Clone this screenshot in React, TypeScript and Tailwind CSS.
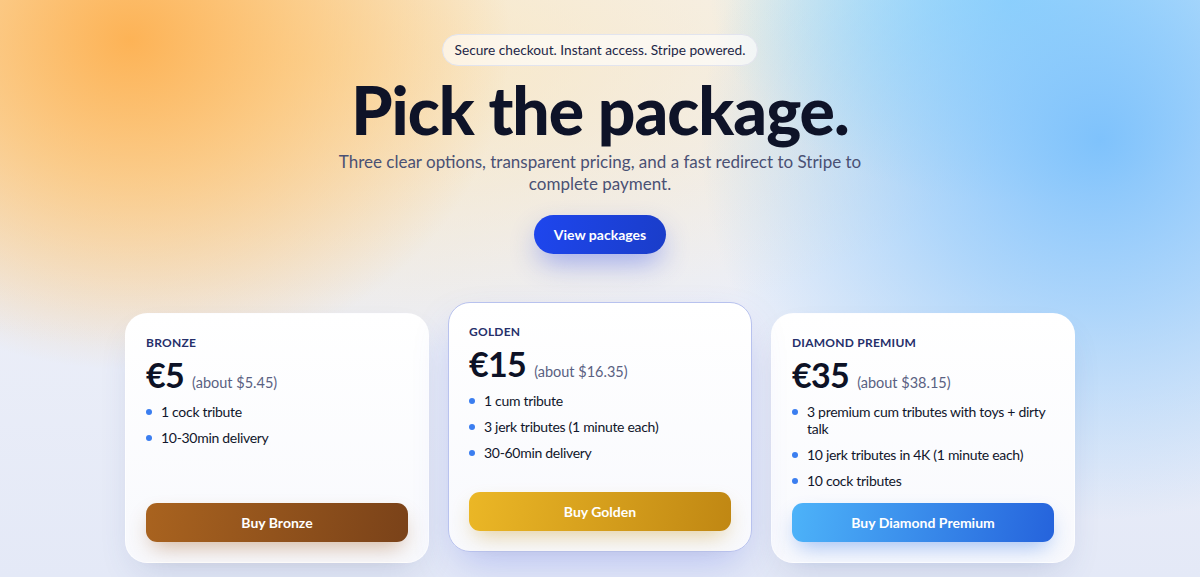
import { useState } from 'react';

interface Pack {
  id: string;
  label: string;
  price: string;
  approx: string;
  features: string[];
  cta: string;
  button: string;
  featured?: boolean;
}

const packs: Pack[] = [
  {
    id: 'bronze',
    label: 'Bronze',
    price: '€5',
    approx: '(about $5.45)',
    features: ['1 cock tribute', '10-30min delivery'],
    cta: 'Buy Bronze',
    button:
      'bg-[linear-gradient(100deg,#a9631f,#7a4219)] shadow-[0_10px_22px_-6px_rgba(160,90,30,0.45)]',
  },
  {
    id: 'golden',
    label: 'Golden',
    price: '€15',
    approx: '(about $16.35)',
    features: ['1 cum tribute', '3 jerk tributes (1 minute each)', '30-60min delivery'],
    cta: 'Buy Golden',
    button:
      'bg-[linear-gradient(100deg,#ebb726,#c08713)] shadow-[0_10px_22px_-6px_rgba(200,150,30,0.45)]',
    featured: true,
  },
  {
    id: 'diamond',
    label: 'Diamond Premium',
    price: '€35',
    approx: '(about $38.15)',
    features: [
      '3 premium cum tributes with toys + dirty talk',
      '10 jerk tributes in 4K (1 minute each)',
      '10 cock tributes',
    ],
    cta: 'Buy Diamond Premium',
    button:
      'bg-[linear-gradient(100deg,#4db3f9,#2563dc)] shadow-[0_10px_22px_-6px_rgba(40,110,230,0.45)]',
  },
];

function PackCard({ pack, onBuy }: { pack: Pack; onBuy: (id: string) => void }) {
  return (
    <div
      className={
        'flex h-[250px] w-[304px] flex-col rounded-[22px] bg-[linear-gradient(180deg,#ffffff,#f8f9fd)] px-5 pb-5 pt-[20px] ' +
        (pack.featured
          ? '-translate-y-[11px] border border-[#b8c2ee] shadow-[0_18px_40px_-10px_rgba(90,110,230,0.35)]'
          : 'border border-white/70 shadow-[0_16px_36px_-12px_rgba(60,80,140,0.2)]')
      }
    >
      <div className="text-[12px] font-bold uppercase tracking-[0.02em] text-[#26306b]">
        {pack.label}
      </div>
      <div className="mt-[3px] flex items-baseline gap-2">
        <span className="text-[34px] font-bold leading-[40px] tracking-[-0.02em] text-[#0d1226]">
          {pack.price}
        </span>
        <span className="text-[14.5px] text-[#5a6182]">{pack.approx}</span>
      </div>
      <ul className="mt-[8px] flex flex-col gap-[9px]">
        {pack.features.map((f) => (
          <li
            key={f}
            className="flex items-start gap-[9px] text-[14px] leading-[17px] tracking-[-0.3px] text-[#11162b]"
          >
            <span className="mt-[6px] h-[6px] w-[6px] flex-none rounded-full bg-[#3b7ef0]" />
            <span>{f}</span>
          </li>
        ))}
      </ul>
      <button
        onClick={() => onBuy(pack.id)}
        className={
          'mt-auto h-[39px] w-full rounded-[11px] text-[14px] font-bold text-white ' + pack.button
        }
      >
        {pack.cta}
      </button>
    </div>
  );
}

export default function App() {
  const [chosen, setChosen] = useState<string | null>(null);

  return (
    <div
      className="h-[577px] w-full overflow-hidden bg-[#ebeef9] bg-[radial-gradient(ellipse_380px_330px_at_130px_40px,rgba(253,176,80,0.95),rgba(253,190,105,0.7)_42%,rgba(253,215,160,0)_100%),radial-gradient(ellipse_400px_380px_at_1100px_140px,rgba(122,192,252,0.95),rgba(140,200,252,0.65)_45%,rgba(190,220,250,0)_100%),radial-gradient(ellipse_300px_200px_at_1010px_0px,rgba(135,220,253,0.95),rgba(135,220,253,0)_100%),radial-gradient(ellipse_750px_300px_at_300px_60px,rgba(252,225,170,0.75),rgba(252,225,170,0)_100%),linear-gradient(180deg,#f3f4f9,#e4e9f7)] font-['Lato',sans-serif]"
      data-chosen={chosen ?? ''}
    >
      <div className="flex flex-col items-center pt-[34px]">
        <div className="flex h-[32px] items-center rounded-full border border-[#e2e4ee] bg-white/60 px-[12px] text-[13.7px] text-[#1e2747]">
          Secure checkout. Instant access. Stripe powered.
        </div>
        <h1 className="mt-[6px] text-[66px] font-black leading-[76px] tracking-[-0.015em] text-[#0e1328]">
          Pick the package.
        </h1>
        <p className="mt-[3px] max-w-[540px] text-center text-[17px] leading-[22px] text-[#4a5174]">
          Three clear options, transparent pricing, and a fast redirect to Stripe to complete payment.
        </p>
        <button className="mt-[20px] h-[39px] w-[132px] rounded-full bg-[linear-gradient(100deg,#1e46ee,#1a3dc9)] text-[14px] font-bold text-white shadow-[0_12px_28px_-4px_rgba(50,80,240,0.45)]">
          View packages
        </button>
      </div>
      <div className="mt-[59px] flex justify-center gap-[19px]">
        {packs.map((p) => (
          <PackCard key={p.id} pack={p} onBuy={setChosen} />
        ))}
      </div>
    </div>
  );
}
